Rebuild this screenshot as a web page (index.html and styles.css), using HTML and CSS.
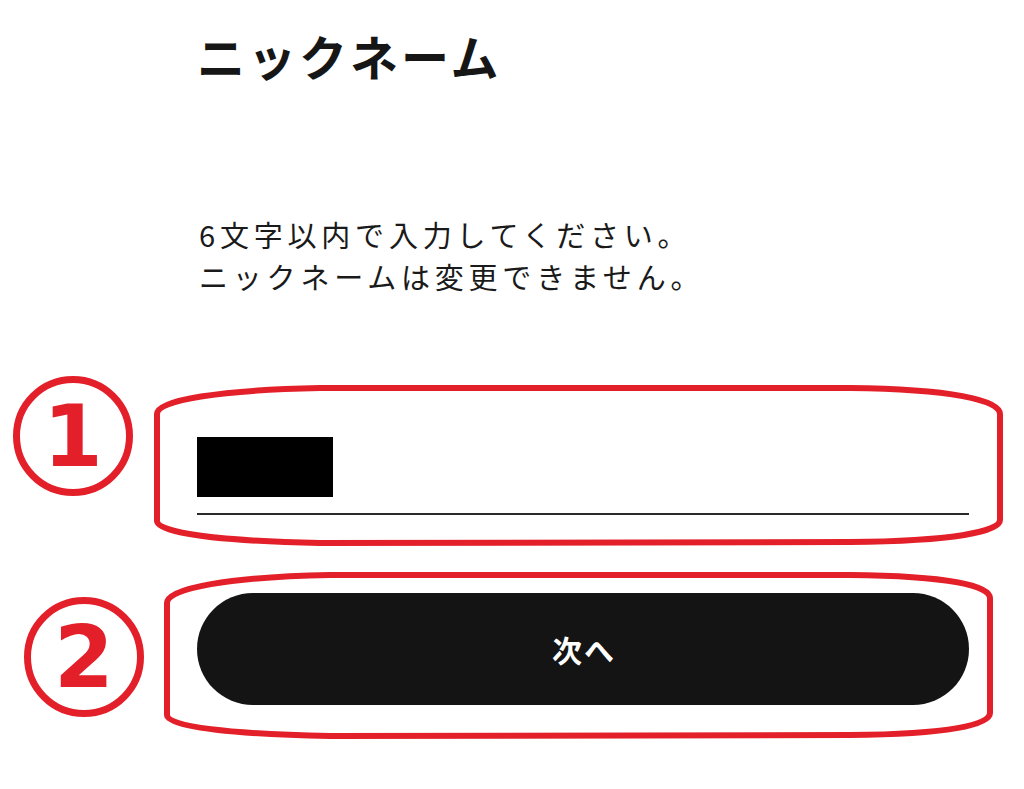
FILE: index.html
```html
<!DOCTYPE html>
<html lang="ja">
<head>
<meta charset="utf-8">
<title>ニックネーム</title>
<link rel="stylesheet" href="styles.css">
</head>
<body>
<main class="page">
  <h1 class="title">ニックネーム</h1>
  <p class="lead">6文字以内で入力してください。<br>ニックネームは変更できません。</p>
  <div class="field">
    <div class="field-value"><span class="redact"></span></div>
  </div>
  <button class="next" type="button">次へ</button>
</main>

<div class="annot">
  <svg class="annot-svg" width="1024" height="789" viewBox="0 0 1024 789" aria-hidden="true">
    <path d="M157 521 L157 414 C157 400 220 390 320 388 L850 388 C950 389 1000 400 1000 414 L1000 520 C1000 532 950 541 850 542 L320 543 C220 541 157 533 157 521 Z" />
    <path d="M167 715 L167 603 C167 588 230 577 330 575 L850 575 C950 576 990 586 990 598 L990 713 C990 725 950 734 850 735 L330 736 C230 734 167 727 167 715 Z" />
  </svg>
  <div class="badge badge-1">1</div>
  <div class="badge badge-2">2</div>
</div>
</body>
</html>
```
FILE: styles.css
```css
html, body {
  margin: 0;
  padding: 0;
  background: #ffffff;
}

body {
  width: 1024px;
  height: 789px;
  position: relative;
  overflow: hidden;
  font-family: "Noto Sans CJK JP", "Noto Sans", sans-serif;
  color: #1a1a1a;
}

.page {
  display: flex;
  flex-direction: column;
  margin-left: 197px;
  width: 772px;
}

.title {
  margin: 31px 0 0 0;
  font-size: 48px;
  line-height: 48px;
  font-weight: 700;
  letter-spacing: 3px;
  color: #161616;
}

.lead {
  margin: 134px 0 0 2px;
  font-size: 29px;
  line-height: 42px;
  letter-spacing: 4.8px;
  font-weight: 400;
  color: #1a1a1a;
}

.field {
  margin-top: 140px;
  border-bottom: 2px solid #2a2a2a;
  padding-bottom: 16px;
}

.field-value {
  height: 60px;
  display: flex;
  align-items: center;
}

.redact {
  display: block;
  width: 136px;
  height: 60px;
  background: #000000;
}

.next {
  margin-top: 78px;
  height: 112px;
  border: none;
  border-radius: 56px;
  background: #141414;
  color: #ffffff;
  font-family: "Noto Sans CJK JP", "Noto Sans", sans-serif;
  font-size: 30px;
  font-weight: 700;
  letter-spacing: 2px;
  padding: 0 0 0 2px;
}

.annot {
  position: absolute;
  left: 0;
  top: 0;
  width: 1024px;
  height: 789px;
  pointer-events: none;
}

.annot-svg {
  position: absolute;
  left: 0;
  top: 0;
}

.annot-svg path {
  fill: none;
  stroke: #e3202a;
  stroke-width: 6;
  stroke-linejoin: round;
}

.badge {
  position: absolute;
  width: 106px;
  height: 106px;
  border: 7px solid #e3202a;
  border-radius: 50%;
  display: flex;
  align-items: center;
  justify-content: center;
  color: #e3202a;
  font-family: "DejaVu Sans", sans-serif;
  font-weight: 700;
  font-size: 86px;
  line-height: 1;
}

.badge-1 {
  left: 13px;
  top: 376px;
}

.badge-2 {
  left: 24px;
  top: 597px;
}
```
